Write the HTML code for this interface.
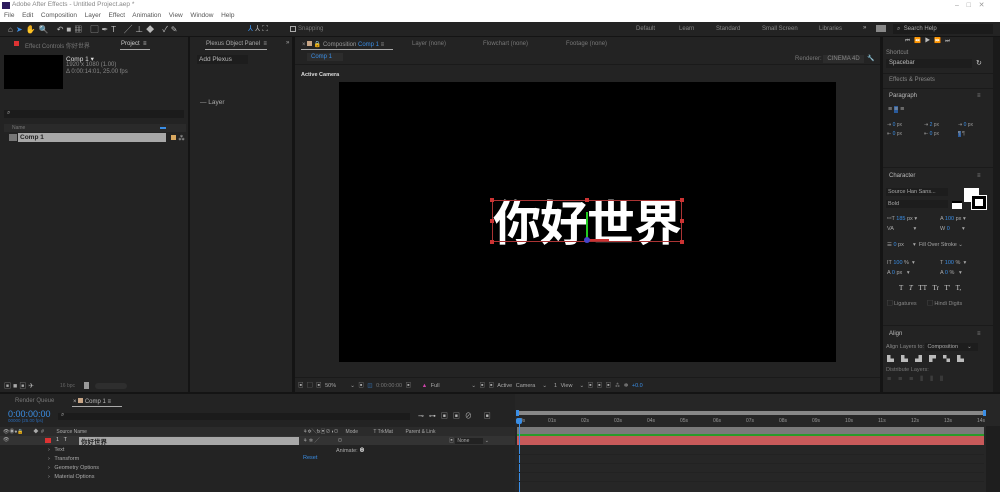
<!DOCTYPE html>
<html><head><meta charset="utf-8"><style>
*{margin:0;padding:0;box-sizing:border-box}
body{width:1000px;height:492px;overflow:hidden;background:#141414;font-family:"Liberation Sans","Noto Sans CJK SC",sans-serif;font-size:6px;color:#9a9a9a;position:relative}
.a{position:absolute}
.p{position:absolute;background:#232323}
.t{position:absolute;white-space:nowrap}
.r{position:absolute;top:418px;color:#999;font-size:5px}
</style></head><body>
<div class="a" style="left:0;top:0;width:1000px;height:22px;background:#fff"></div>
<div class="a" style="left:2px;top:2px;width:8px;height:7px;background:#2d1b5e"></div>
<div class="t" style="left:12px;top:1px;font-size:6.5px;color:#888">Adobe After Effects - Untitled Project.aep *</div>
<div class="t" style="left:955px;top:1px;font-size:7px;color:#999">–&nbsp;&nbsp;&nbsp;&nbsp;□&nbsp;&nbsp;&nbsp;&nbsp;✕</div>
<div class="t" style="left:4px;top:12px;font-size:6.5px;color:#555;word-spacing:2px">File&nbsp; Edit&nbsp; Composition&nbsp; Layer&nbsp; Effect&nbsp; Animation&nbsp; View&nbsp; Window&nbsp; Help</div>
<div class="a" style="left:0;top:22px;width:1000px;height:14px;background:#232323"></div>
<div class="t" style="left:8px;top:24px;font-size:8px;color:#bbb;letter-spacing:3px">⌂<span style="color:#3a8ee6">➤</span>✋🔍 ↶■▦ ▢✒T ╱⊥◆ ✓✎</div>
<div class="t" style="left:248px;top:24px;font-size:8px;color:#3a8ee6">⅄ <span style="color:#aaa">⅄ ⛶</span></div>
<div class="a" style="left:290px;top:26px;width:6px;height:6px;border:1px solid #aaa"></div>
<div class="t" style="left:298px;top:26px;color:#777">Snapping</div>
<div class="t" style="left:636px;top:26px;color:#888">Default</div>
<div class="t" style="left:679px;top:26px;color:#888">Learn</div>
<div class="t" style="left:716px;top:26px;color:#888">Standard</div>
<div class="t" style="left:762px;top:26px;color:#888">Small Screen</div>
<div class="t" style="left:819px;top:26px;color:#888">Libraries</div>
<div class="t" style="left:863px;top:25px;color:#bbb">»</div>
<div class="a" style="left:876px;top:25px;width:10px;height:7px;background:#888"></div>
<div class="a" style="left:893px;top:24px;width:100px;height:10px;background:#1b1b1b"></div>
<div class="t" style="left:897px;top:26px;color:#aaa">⌕ &nbsp;Search Help</div>
<div class="p" style="left:0;top:37px;width:188px;height:355px"></div>
<div class="a" style="left:14px;top:41px;width:5px;height:5px;background:#d33"></div>
<div class="t" style="left:25px;top:41px;color:#777">Effect Controls 你好世界</div>
<div class="t" style="left:121px;top:41px;color:#ccc">Project &nbsp;≡</div>
<div class="a" style="left:120px;top:49px;width:30px;height:1px;background:#aaa"></div>
<div class="a" style="left:4px;top:55px;width:59px;height:34px;background:#000"></div>
<div class="t" style="left:66px;top:55px;color:#ddd;font-size:6.5px">Comp 1 ▾</div>
<div class="t" style="left:66px;top:62px;color:#888;line-height:6.5px">1920 x 1080 (1.00)<br>Δ 0:00:14:01, 25.00 fps</div>
<div class="a" style="left:4px;top:110px;width:180px;height:8px;background:#1b1b1b"></div>
<div class="t" style="left:7px;top:110px;color:#aaa">⌕</div>
<div class="a" style="left:4px;top:124px;width:182px;height:8px;background:#2a2a2a"></div>
<div class="t" style="left:12px;top:125px;color:#777;font-size:5px">Name</div>
<div class="a" style="left:160px;top:127px;width:6px;height:2px;background:#3a8ee6"></div>
<div class="a" style="left:9px;top:134px;width:8px;height:7px;background:#777"></div>
<div class="a" style="left:18px;top:133px;width:148px;height:9px;background:#a8a8a8"></div>
<div class="t" style="left:20px;top:134px;color:#222;font-weight:bold;font-size:6.5px">Comp 1</div>
<div class="a" style="left:171px;top:135px;width:5px;height:5px;background:#d8a860"></div>
<div class="t" style="left:178px;top:133px;color:#ccc;font-size:7px">⁂</div>
<div class="t" style="left:4px;top:381px;color:#aaa;font-size:7px;letter-spacing:2px">▣■▣✈</div>
<div class="t" style="left:60px;top:383px;color:#666;font-size:5px">16 bpc</div>
<div class="a" style="left:84px;top:382px;width:5px;height:7px;background:#999"></div>
<div class="a" style="left:95px;top:383px;width:32px;height:6px;border-radius:3px;background:#2e2e2e"></div>
<div class="p" style="left:190px;top:37px;width:102px;height:355px"></div>
<div class="t" style="left:206px;top:41px;color:#aaa">Plexus Object Panel &nbsp;≡</div>
<div class="a" style="left:205px;top:49px;width:62px;height:1px;background:#aaa"></div>
<div class="t" style="left:286px;top:40px;color:#aaa">»</div>
<div class="a" style="left:197px;top:55px;width:51px;height:9px;background:#1d1d1d"></div>
<div class="t" style="left:199px;top:56px;color:#bbb;font-size:6.5px">Add Plexus</div>
<div class="t" style="left:200px;top:99px;color:#aaa;font-size:6.5px">— Layer</div>
<div class="p" style="left:295px;top:37px;width:585px;height:355px"></div>
<div class="t" style="left:302px;top:41px;color:#999">× <span style="display:inline-block;width:5px;height:5px;background:#c9a686"></span> 🔒 Composition <span style="color:#3a8ee6">Comp 1</span> ≡</div>
<div class="t" style="left:412px;top:41px;color:#777">Layer (none)</div>
<div class="t" style="left:483px;top:41px;color:#777">Flowchart (none)</div>
<div class="t" style="left:566px;top:41px;color:#777">Footage (none)</div>
<div class="a" style="left:301px;top:49px;width:92px;height:1px;background:#aaa"></div>
<div class="a" style="left:295px;top:64px;width:585px;height:1px;background:#1a1a1a"></div>
<div class="a" style="left:307px;top:53px;width:36px;height:8px;background:#2c2c2c"></div>
<div class="t" style="left:311px;top:54px;color:#3a8ee6">Comp 1</div>
<div class="t" style="left:795px;top:55px;color:#777">Renderer: <span style="background:#2c2c2c;padding:1px 4px;color:#888">CINEMA 4D</span> &nbsp;<span style="color:#ccc">🔧</span></div>
<div class="t" style="left:301px;top:72px;color:#ddd;font-weight:bold;font-size:5.5px">Active Camera</div>
<div class="a" style="left:339px;top:82px;width:497px;height:280px;background:#000"></div>
<div class="t" style="left:493px;top:191px;color:#fff;font-weight:bold;font-size:48px;font-family:'Noto Sans CJK SC',sans-serif;line-height:56px;letter-spacing:-1px">你好世界</div>
<div class="a" style="left:492px;top:200px;width:190px;height:42px;border:1px solid #a33"></div>
<div class="a" style="left:490px;top:198px;width:4px;height:4px;background:#c33"></div>
<div class="a" style="left:585px;top:198px;width:4px;height:4px;background:#c33"></div>
<div class="a" style="left:680px;top:198px;width:4px;height:4px;background:#c33"></div>
<div class="a" style="left:490px;top:219px;width:4px;height:4px;background:#c33"></div>
<div class="a" style="left:680px;top:219px;width:4px;height:4px;background:#c33"></div>
<div class="a" style="left:490px;top:240px;width:4px;height:4px;background:#c33"></div>
<div class="a" style="left:680px;top:240px;width:4px;height:4px;background:#c33"></div>
<div class="a" style="left:586px;top:212px;width:2px;height:28px;background:#2c2"></div>
<div class="a" style="left:587px;top:239px;width:22px;height:2px;background:#c33"></div>
<div class="a" style="left:584px;top:237px;width:6px;height:6px;border-radius:3px;background:#44c"></div>
<div class="a" style="left:295px;top:377px;width:585px;height:1px;background:#1a1a1a"></div>
<div class="t" style="left:298px;top:381px;color:#aaa;font-size:5.5px;word-spacing:2px">▣ ▢ ▣ <span>50%</span> &nbsp;&nbsp;&nbsp;⌄ ▣ <span style="color:#3a8ee6">◫</span> <span style="color:#777">0:00:00:00</span> ▣ &nbsp;&nbsp;<span style="color:#c4a">▲</span> Full &nbsp;&nbsp;&nbsp;&nbsp;&nbsp;&nbsp;&nbsp;&nbsp;⌄ ▣ ▣ Active Camera &nbsp;⌄ &nbsp;1 View &nbsp;⌄ ▣ ▣ ▣ ⁂ ✲ <span style="color:#3a8ee6">+0.0</span></div>
<div class="p" style="left:883px;top:37px;width:110px;height:355px"></div>
<div class="a" style="left:993px;top:37px;width:7px;height:355px;background:#1a1a1a"></div>
<div class="t" style="left:905px;top:36px;color:#bbb;font-size:5.5px;letter-spacing:4px">⏮⏪▶⏩⏭</div>
<div class="t" style="left:886px;top:50px;color:#888">Shortcut</div>
<div class="a" style="left:886px;top:59px;width:86px;height:9px;background:#1d1d1d"></div>
<div class="t" style="left:889px;top:60px;color:#bbb">Spacebar</div>
<div class="t" style="left:976px;top:59px;color:#ccc;font-size:7px">↻</div>
<div class="a" style="left:883px;top:73px;width:110px;height:1px;background:#1a1a1a"></div>
<div class="t" style="left:889px;top:77px;color:#888">Effects &amp; Presets</div>
<div class="a" style="left:883px;top:88px;width:110px;height:1px;background:#1a1a1a"></div>
<div class="t" style="left:889px;top:93px;color:#bbb">Paragraph</div>
<div class="t" style="left:977px;top:93px;color:#888">≡</div>
<div class="t" style="left:888px;top:106px;color:#aaa;font-size:7px">≡ <span style="background:#2a5a9a">≡</span> ≡</div>
<div class="t" style="left:887px;top:121px;color:#999;font-size:5px;line-height:9px">⇥ <span style="color:#3a8ee6">0</span> px<br>⇤ <span style="color:#3a8ee6">0</span> px</div>
<div class="t" style="left:924px;top:121px;color:#999;font-size:5px;line-height:9px">⇥ <span style="color:#3a8ee6">2</span> px<br>⇤ <span style="color:#3a8ee6">0</span> px</div>
<div class="t" style="left:958px;top:121px;color:#999;font-size:5px;line-height:9px">⇥ <span style="color:#3a8ee6">0</span> px<br><span style="background:#2a5a9a">¶</span> ¶</div>
<div class="a" style="left:883px;top:167px;width:110px;height:1px;background:#1a1a1a"></div>
<div class="t" style="left:889px;top:173px;color:#bbb">Character</div>
<div class="t" style="left:977px;top:173px;color:#888">≡</div>
<div class="a" style="left:886px;top:188px;width:62px;height:8px;background:#1d1d1d"></div>
<div class="t" style="left:888px;top:189px;color:#aaa;font-size:5.5px">Source Han Sans...</div>
<div class="a" style="left:886px;top:200px;width:62px;height:8px;background:#1d1d1d"></div>
<div class="t" style="left:888px;top:201px;color:#aaa;font-size:5.5px">Bold</div>
<div class="a" style="left:964px;top:188px;width:15px;height:14px;background:#fff"></div>
<div class="a" style="left:972px;top:196px;width:14px;height:13px;background:#fff;border:3px solid #000;outline:1px solid #fff"></div>
<div class="a" style="left:952px;top:201px;width:10px;height:8px;background:#fff;border-top:2px solid #000"></div>
<div class="t" style="left:887px;top:214px;color:#aaa;font-size:5.5px;line-height:10px">ꟷT <span style="color:#3a8ee6">185</span> px ▾<br>VA &nbsp;&nbsp;&nbsp;&nbsp;&nbsp;&nbsp;&nbsp;&nbsp;&nbsp;&nbsp;&nbsp;&nbsp;▾</div>
<div class="t" style="left:940px;top:214px;color:#aaa;font-size:5.5px;line-height:10px">A <span style="color:#3a8ee6">100</span> px ▾<br>W <span style="color:#3a8ee6">0</span> &nbsp;&nbsp;&nbsp;&nbsp;&nbsp;&nbsp;&nbsp;▾</div>
<div class="t" style="left:887px;top:242px;color:#aaa;font-size:5.5px">☰ <span style="color:#3a8ee6">0</span> px &nbsp;&nbsp;&nbsp;&nbsp;&nbsp;▾ &nbsp;Fill Over Stroke ⌄</div>
<div class="t" style="left:887px;top:258px;color:#aaa;font-size:5.5px;line-height:10px">IT <span style="color:#3a8ee6">100</span> % &nbsp;▾<br>A <span style="color:#3a8ee6">0</span> px &nbsp;&nbsp;▾</div>
<div class="t" style="left:940px;top:258px;color:#aaa;font-size:5.5px;line-height:10px">T <span style="color:#3a8ee6">100</span> % &nbsp;▾<br>A <span style="color:#3a8ee6">0</span> % &nbsp;&nbsp;▾</div>
<div class="t" style="left:899px;top:284px;color:#ccc;font-size:7px;font-family:'Liberation Serif',serif;word-spacing:4px">T <i>T</i> TT Tr T' T,</div>
<div class="t" style="left:887px;top:299px;color:#888;font-size:5.5px">▢ Ligatures &nbsp;&nbsp;&nbsp;&nbsp;&nbsp;&nbsp;▢ Hindi Digits</div>
<div class="a" style="left:883px;top:325px;width:110px;height:1px;background:#1a1a1a"></div>
<div class="t" style="left:889px;top:331px;color:#bbb">Align</div>
<div class="t" style="left:977px;top:331px;color:#888">≡</div>
<div class="t" style="left:886px;top:344px;color:#888;font-size:5.5px">Align Layers to: <span style="background:#1d1d1d;padding:1px 6px 1px 2px;color:#aaa">Composition &nbsp;&nbsp;&nbsp;&nbsp;&nbsp;⌄</span></div>
<div class="t" style="left:887px;top:354px;color:#bbb;font-size:7px;letter-spacing:7px">▙▙▟▛▚▙</div>
<div class="t" style="left:886px;top:367px;color:#777;font-size:5.5px">Distribute Layers:</div>
<div class="t" style="left:887px;top:376px;color:#555;font-size:7px;letter-spacing:7px">≡≡≡⫴⫴⫴</div>
<div class="p" style="left:0;top:394px;width:515px;height:98px"></div>
<div class="p" style="left:515px;top:394px;width:485px;height:98px;background:#262626"></div>
<div class="t" style="left:15px;top:398px;color:#777">Render Queue</div>
<div class="t" style="left:73px;top:398px;color:#bbb">× <span style="display:inline-block;width:5px;height:5px;background:#c9a686"></span> Comp 1 ≡</div>
<div class="a" style="left:72px;top:406px;width:50px;height:1px;background:#aaa"></div>
<div class="t" style="left:8px;top:409px;color:#3a8ee6;font-size:9px">0:00:00:00</div>
<div class="t" style="left:8px;top:418px;color:#2a6ab6;font-size:4.5px">00000 (25.00 fps)</div>
<div class="a" style="left:58px;top:413px;width:352px;height:7px;background:#1b1b1b"></div>
<div class="t" style="left:61px;top:412px;color:#aaa">⌕</div>
<div class="t" style="left:418px;top:411px;color:#bbb;font-size:7px;letter-spacing:5px">⊸⊶▣▣⊘ ▣</div>
<div class="a" style="left:0;top:427px;width:515px;height:9px;background:#2b2b2b"></div>
<div class="t" style="left:3px;top:428px;color:#aaa;font-size:5px">👁◉●🔒 &nbsp;&nbsp;&nbsp;&nbsp;&nbsp;&nbsp;◆ &nbsp;# &nbsp;&nbsp;&nbsp;&nbsp;&nbsp;&nbsp;&nbsp;&nbsp;Source Name</div>
<div class="t" style="left:303px;top:428px;color:#aaa;font-size:5px">⚘✲╲fx▣⊘◑⊙ &nbsp;&nbsp;&nbsp;&nbsp;Mode &nbsp;&nbsp;&nbsp;&nbsp;&nbsp;&nbsp;&nbsp;&nbsp;&nbsp;&nbsp;T TrkMat &nbsp;&nbsp;&nbsp;&nbsp;&nbsp;&nbsp;&nbsp;&nbsp;Parent &amp; Link</div>
<div class="a" style="left:0;top:436px;width:515px;height:9px;background:#333"></div>
<div class="t" style="left:3px;top:437px;color:#aaa;font-size:5px">👁</div>
<div class="a" style="left:45px;top:438px;width:6px;height:5px;background:#d33"></div>
<div class="t" style="left:56px;top:437px;color:#ccc;font-size:5.5px">1 &nbsp;&nbsp;T</div>
<div class="a" style="left:79px;top:437px;width:220px;height:8px;background:#a8a8a8"></div>
<div class="t" style="left:81px;top:436px;color:#222;font-weight:bold;font-size:6.5px">你好世界</div>
<div class="t" style="left:303px;top:437px;color:#aaa;font-size:5px">⚘ ✲ ╱ &nbsp;&nbsp;&nbsp;&nbsp;&nbsp;&nbsp;&nbsp;&nbsp;&nbsp;&nbsp;&nbsp;&nbsp;⊙</div>
<div class="t" style="left:449px;top:437px;color:#aaa;font-size:5px">▣ <span style="background:#222;padding:0 14px 0 2px">None</span> ⌄</div>
<div class="t" style="left:48px;top:446px;color:#aaa;font-size:5.5px;line-height:9px">›&nbsp;&nbsp; Text<br>›&nbsp;&nbsp; Transform<br>›&nbsp;&nbsp; Geometry Options<br>›&nbsp;&nbsp; Material Options</div>
<div class="t" style="left:336px;top:446px;color:#aaa;font-size:5.5px">Animate: <b style="color:#fff">⊕</b></div>
<div class="t" style="left:303px;top:455px;color:#3a8ee6;font-size:5.5px">Reset</div>
<div class="a" style="left:517px;top:411px;width:468px;height:4px;background:#888;border-radius:2px"></div>
<div class="a" style="left:516px;top:410px;width:3px;height:6px;background:#3a8ee6"></div>
<div class="a" style="left:983px;top:410px;width:3px;height:6px;background:#3a8ee6"></div>
<div class="r" style="left:520px">0s</div><div class="r" style="left:548px">01s</div><div class="r" style="left:581px">02s</div><div class="r" style="left:614px">03s</div><div class="r" style="left:647px">04s</div><div class="r" style="left:680px">05s</div><div class="r" style="left:713px">06s</div><div class="r" style="left:746px">07s</div><div class="r" style="left:779px">08s</div><div class="r" style="left:812px">09s</div><div class="r" style="left:845px">10s</div><div class="r" style="left:878px">11s</div><div class="r" style="left:911px">12s</div><div class="r" style="left:944px">13s</div><div class="r" style="left:977px">14s</div>
<div class="a" style="left:517px;top:427px;width:467px;height:8px;background:#7a7a7a"></div>
<div class="a" style="left:517px;top:434px;width:467px;height:2px;background:#2a9a2a"></div>
<div class="a" style="left:517px;top:436px;width:467px;height:9px;background:#c85a5a"></div>
<div class="a" style="left:519px;top:418px;width:1px;height:74px;background:#3a8ee6"></div>
<div class="a" style="left:516px;top:418px;width:6px;height:6px;background:#3a8ee6;border-radius:2px"></div>
<div class="a" style="left:517px;top:454px;width:467px;height:1px;background:#222"></div>
<div class="a" style="left:517px;top:463px;width:467px;height:1px;background:#222"></div>
<div class="a" style="left:517px;top:472px;width:467px;height:1px;background:#222"></div>
<div class="a" style="left:517px;top:481px;width:467px;height:1px;background:#222"></div>
<div class="a" style="left:986px;top:426px;width:14px;height:66px;background:#1e1e1e"></div>
</body></html>
